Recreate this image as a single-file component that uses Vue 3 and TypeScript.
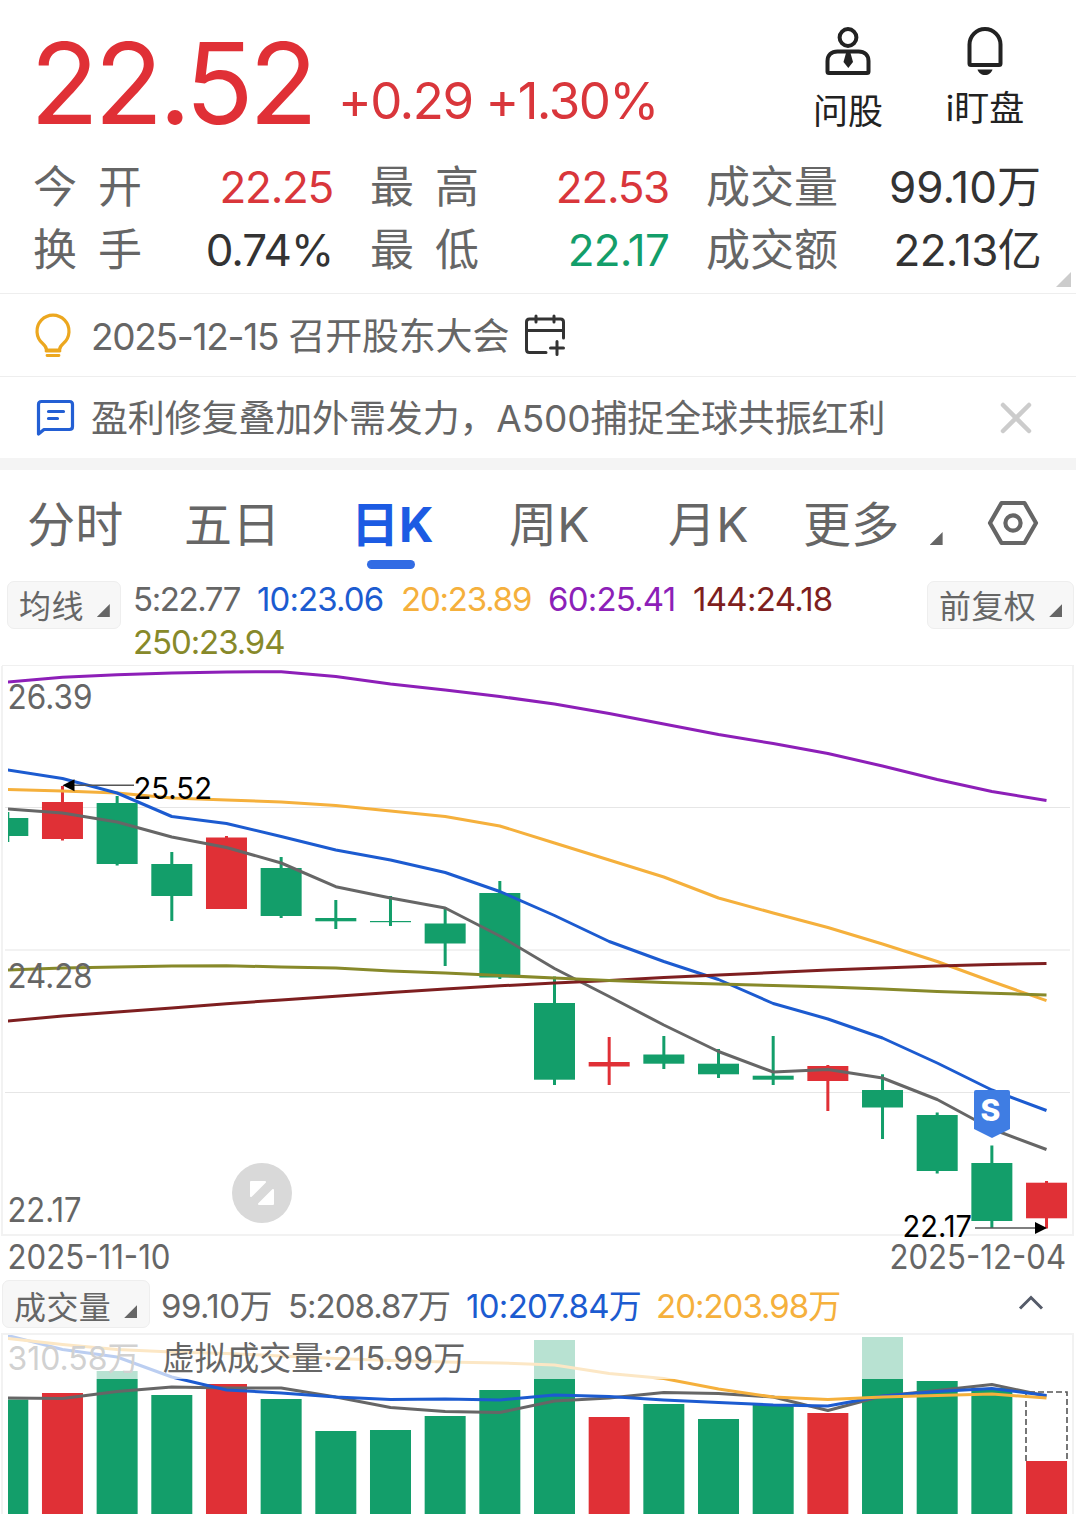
<script setup lang="ts">
interface Quote { label: string; value: string; tone: string; track: number }
interface Average { text: string; color: string; width: number; track: number }
interface Candle { top: number; bottom: number; high: number; low: number; up?: boolean }
interface Line { color: string; ys: number[] }

const RED = '#e03036'
const GREEN = '#139e6a'
const GRAY = '#666666'
const BLUE = '#1c5bd0'
const ORANGE = '#f5b03c'

const quotes: Quote[] = [
  { label: '今开', value: '22.25', tone: 'up', track: -1.3 },
  { label: '最高', value: '22.53', tone: 'up', track: -1.3 },
  { label: '成交量', value: '99.10万', tone: 'plain', track: 0 },
  { label: '换手', value: '0.74%', tone: 'plain', track: -1.1 },
  { label: '最低', value: '22.17', tone: 'down', track: -0.8 },
  { label: '成交额', value: '22.13亿', tone: 'plain', track: -0.7 },
]

const averages: Average[] = [
  { text: '5:22.77', color: GRAY, width: 124, track: -1.4 },
  { text: '10:23.06', color: BLUE, width: 144, track: -0.9 },
  { text: '20:23.89', color: ORANGE, width: 147, track: -1.2 },
  { text: '60:25.41', color: '#8d1fb8', width: 145, track: -0.8 },
  { text: '144:24.18', color: '#7e1f20', width: 142, track: -0.7 },
  { text: '250:23.94', color: '#87892a', width: 152, track: -1.1 },
]

const volumeAverages: Average[] = [
  { text: '99.10万', color: GRAY, width: 127, track: -0.5 },
  { text: '5:208.87万', color: GRAY, width: 178, track: -1 },
  { text: '10:207.84万', color: BLUE, width: 190, track: -0.7 },
  { text: '20:203.98万', color: ORANGE, width: 190, track: -1 },
]

const tabs = ['分时', '五日', '日K', '周K', '月K', '更多']
const activeTab = '日K'

const centre = (i: number): number => 7.8 + i * 54.67

const candles: Candle[] = [
  { top: 818, bottom: 836, high: 812, low: 842 },
  { top: 802, bottom: 839, high: 786, low: 840.5, up: true },
  { top: 803, bottom: 864, high: 796, low: 865.5 },
  { top: 864, bottom: 896, high: 852, low: 921 },
  { top: 837.5, bottom: 909, high: 836, low: 909, up: true },
  { top: 868, bottom: 916, high: 857, low: 918 },
  { top: 918, bottom: 921.3, high: 900, low: 929 },
  { top: 921, bottom: 922.2, high: 896, low: 926 },
  { top: 923.5, bottom: 943.5, high: 907, low: 966 },
  { top: 893, bottom: 977.5, high: 881, low: 979 },
  { top: 1003, bottom: 1079.7, high: 976.5, low: 1085 },
  { top: 1062, bottom: 1066.5, high: 1037, low: 1085, up: true },
  { top: 1054.5, bottom: 1063.7, high: 1036, low: 1069 },
  { top: 1063.7, bottom: 1074.3, high: 1049, low: 1078 },
  { top: 1075.7, bottom: 1079.7, high: 1036, low: 1085 },
  { top: 1066, bottom: 1081, high: 1065, low: 1111, up: true },
  { top: 1090, bottom: 1107.5, high: 1074.3, low: 1139 },
  { top: 1115, bottom: 1171, high: 1112.5, low: 1173.5 },
  { top: 1163, bottom: 1221, high: 1145.5, low: 1228 },
  { top: 1182.7, bottom: 1218.3, high: 1181, low: 1228.5, up: true },
]

const priceLines: Line[] = [
  { color: '#8d1fb8', ys: [682, 677.3, 674.7, 673, 672, 671.7, 676.5, 684, 690, 696.5, 704, 713.5, 724, 734.5, 743.5, 753.5, 766, 779.5, 791.5, 800.5] },
  { color: ORANGE, ys: [789.5, 791, 793, 798, 800, 802, 805.5, 811, 816.5, 826, 843, 860, 877, 898, 913, 927.5, 944, 961.5, 981.5, 1000.7] },
  { color: BLUE, ys: [770, 778.5, 793, 816.5, 823.5, 836.5, 850, 860, 872.5, 891.5, 915.5, 941.5, 961.5, 979.5, 1003.5, 1019, 1038, 1063, 1090, 1110.5] },
  { color: GRAY, ys: [809, 813, 822, 837, 847.5, 863, 886.7, 898, 908, 936, 968.5, 996.5, 1025, 1051.5, 1072, 1069.5, 1078, 1099.5, 1129, 1149.5] },
  { color: '#7e1f20', ys: [1021, 1016, 1012, 1008, 1003.7, 1000, 996.3, 992.5, 989, 985.8, 983, 980.5, 977.5, 975, 972.5, 970, 968, 966, 964.5, 963.5] },
  { color: '#87892a', ys: [970, 968, 967, 966, 965.7, 967, 968, 971, 973, 975.5, 978, 980.5, 982.5, 984, 985.5, 987, 989, 991.5, 993.3, 995] },
]

const volumeTops = [1399.5, 1393, 1371, 1395, 1384, 1399, 1431, 1430, 1416, 1390, 1340, 1417, 1404, 1419, 1405, 1413, 1337, 1381, 1388, 1461]

const volumeLines: Line[] = [
  { color: GRAY, ys: [1398, 1398.5, 1391.5, 1387, 1388, 1388, 1397, 1407.5, 1411.5, 1412.5, 1401, 1398, 1392.5, 1393.5, 1397, 1410.5, 1396, 1390.5, 1384.5, 1396] },
  { color: BLUE, ys: [1335.5, 1349.5, 1357, 1377, 1390, 1393, 1397, 1399.5, 1399, 1400, 1395, 1396.5, 1400, 1402.5, 1405, 1406, 1396, 1391.5, 1388.5, 1395.5] },
  { color: ORANGE, ys: [1338.5, 1344.5, 1349.5, 1352, 1353.5, 1356, 1358.5, 1360.5, 1362, 1363, 1365, 1373.5, 1378.5, 1389, 1397, 1399.5, 1397, 1395.5, 1394, 1398] },
]

const points = (ys: number[]): string => ys.map((y, i) => `${centre(i).toFixed(1)},${y}`).join(' ')
</script>

<template>
  <main class="screen">
    <header class="summary">
      <div class="headline">
        <span class="price">22.52</span>
        <span class="change">+0.29 +1.30%</span>
        <nav class="actions">
          <div class="action ask">
            <svg width="48" height="52" viewBox="0 0 48 52" fill="none" stroke="#222" stroke-width="4">
              <circle cx="24" cy="12.5" r="8.4" />
              <path d="M3.5 46.5V36c0-6 4-9.500 10-9.500h21c6 0 10 3.500 10 9.500V46.500c0 1-.5 1.500-1.500 1.500H5c-1 0-1.500-.5-1.500-1.500Z" />
              <path d="M22 28h4.500l2.500 9-4.700 6-4.800-6z" fill="#222" stroke="none" />
            </svg>
            <span>问股</span>
          </div>
          <div class="action watch">
            <svg width="48" height="52" viewBox="0 0 48 52" fill="none" stroke="#222" stroke-width="4">
              <path d="M8.500 38.500V19.500a15.500 15.500 0 0 1 31 0V38.500c0 1-.5 1.500-1.500 1.500H10c-1 0-1.500-.5-1.500-1.500Z" />
              <path d="M16.500 44.500h15c-1 3.500-4 5.500-7.500 5.500s-6.500-2-7.500-5.500Z" fill="#222" stroke="none" />
            </svg>
            <span>i盯盘</span>
          </div>
        </nav>
      </div>
      <dl class="quotes">
        <div v-for="q in quotes" :key="q.label" class="quote">
          <dt :class="{ spread: q.label.length === 2 }">{{ q.label }}</dt>
          <dd :class="q.tone" :style="{ letterSpacing: q.track + 'px' }">{{ q.value }}</dd>
        </div>
      </dl>
      <i class="corner"></i>
    </header>

    <section class="notice event">
      <svg class="notice-icon" width="40" height="46" viewBox="0 0 40 46" fill="none" stroke="#eca71f" stroke-width="3.200">
        <path d="M12.500 38c0-3-1.500-4.500-3.800-6.500A16 16.100 0 1 1 29.300 31.500c-2.300 2-3.800 3.500-3.800 6.500Z" stroke-linejoin="round" />
        <path d="M12 39h14M13 43.500h12" stroke-linecap="round" stroke-width="2.800" />
      </svg>
      <span class="notice-text date"><time>2025-12-15</time> 召开股东大会</span>
      <svg width="44" height="44" viewBox="0 0 44 44" fill="none" stroke="#333" stroke-width="3" stroke-linecap="round">
        <path d="M23 39.500H6.500c-2 0-3-1-3-3V9c0-2 1-3 3-3h31c2 0 3 1 3 3v16M3.500 17.500h37M13 3v6M31 3v6M34 28.500v13M27.500 35h13" />
      </svg>
    </section>
    <section class="notice news">
      <svg class="notice-icon" width="40" height="40" viewBox="0 0 40 40" fill="none" stroke="#235fd4" stroke-width="3.200" stroke-linejoin="round">
        <path d="M3.500 36V6.500c0-2 1-3 3-3h28c2 0 3 1 3 3v22c0 2-1 3-3 3H9z" />
        <path d="M13.500 13.500h15M13.500 20.500h9" stroke-linecap="round" />
      </svg>
      <span class="notice-text">盈利修复叠加外需发力，A500捕捉全球共振红利</span>
      <svg class="close" width="34" height="34" viewBox="0 0 34 34" stroke="#cccccc" stroke-width="4.500" stroke-linecap="round">
        <path d="M4 4l26 26M30 4L4 30" />
      </svg>
    </section>

    <nav class="tabs">
      <span v-for="t in tabs" :key="t" class="tab" :class="{ active: t === activeTab }">
        {{ t }}<i v-if="t === '更多'" class="caret"></i>
      </span>
      <svg width="54" height="50" viewBox="0 0 54 50" fill="none" stroke="#666" stroke-width="4.200" stroke-linejoin="round">
        <path d="M15.500 5h23L50 25 38.500 45h-23L4 25z" />
        <circle cx="27" cy="25" r="7.600" />
      </svg>
    </nav>

    <section class="indicators">
      <button class="chip">均线<i class="caret"></i></button>
      <div class="values">
        <span v-for="a in averages" :key="a.text" :style="{ color: a.color, width: a.width + 'px', letterSpacing: a.track + 'px' }">{{ a.text }}</span>
      </div>
      <button class="chip adjust">前复权<i class="caret"></i></button>
    </section>

    <svg class="price-chart" width="1076" height="614" viewBox="0 664 1076 614">
      <path d="M5 807.500H1070M5 1092.500H1070" stroke="#e6e6e6" />
      <path d="M5 950H1070" stroke="#f2f2f2" stroke-width="2" />
      <path d="M2 665.500H1074" stroke="#f0f0f0" />
      <path d="M2 666V1235H1073V666" fill="none" stroke="#f2f2f2" stroke-width="2" />
      <clipPath id="plot"><rect x="8" y="664" width="1062" height="572" /></clipPath>
      <g clip-path="url(#plot)">
        <g v-for="(c, i) in candles" :key="i" :fill="c.up ? RED : GREEN">
          <rect :x="centre(i) - 1.5" :y="c.high" width="3" :height="c.low - c.high" />
          <rect :x="centre(i) - 20.5" :y="c.top" width="41" :height="c.bottom - c.top" />
        </g>
        <polyline v-for="(l, i) in priceLines" :key="i" :points="points(l.ys)" :stroke="l.color" class="line" />
      </g>
      <path d="M74 785.200H134M975 1228H1036" stroke="#555" stroke-width="1.400" />
      <path d="M62.500 785.200l12-6v12zM1047 1228l-12-6v12z" />
      <g class="axis">
        <text x="7.500" y="708.500" textLength="85" lengthAdjust="spacingAndGlyphs">26.39</text>
        <text x="7.500" y="987.500" textLength="85" lengthAdjust="spacingAndGlyphs">24.28</text>
        <text x="7.500" y="1221.500" textLength="74" lengthAdjust="spacingAndGlyphs">22.17</text>
        <text x="7.500" y="1268.500" textLength="163" lengthAdjust="spacingAndGlyphs">2025-11-10</text>
        <text x="889.500" y="1268.500" textLength="176.500" lengthAdjust="spacingAndGlyphs">2025-12-04</text>
      </g>
      <g class="extreme">
        <text x="133.500" y="798.500" textLength="78.500" lengthAdjust="spacingAndGlyphs">25.52</text>
        <text x="902.500" y="1237" textLength="69.500" lengthAdjust="spacingAndGlyphs">22.17</text>
      </g>
      <path d="M976 1090h32q2 0 2 2v37l-18 9-18-9v-37q0-2 2-2z" fill="#3f7de3" />
      <text x="990.500" y="1120.500" class="flag">S</text>
      <circle cx="262" cy="1193" r="30" fill="#d9d9d9" />
      <path d="M251 1182h14l-14 14zM273 1190v14h-14z" fill="#fff" stroke="#fff" stroke-width="2" stroke-linejoin="round" />
    </svg>

    <section class="volume-bar">
      <button class="chip volume-chip">成交量<i class="caret"></i></button>
      <div class="values">
        <span v-for="a in volumeAverages" :key="a.text" :style="{ color: a.color, width: a.width + 'px', letterSpacing: a.track + 'px' }">{{ a.text }}</span>
      </div>
      <svg class="collapse" width="26" height="18" viewBox="0 0 26 18" fill="none" stroke="#555b69" stroke-width="3">
        <path d="M2 14.500L13 3.500l11 11" />
      </svg>
    </section>

    <svg class="volume-chart" width="1076" height="184" viewBox="0 1330 1076 184">
      <path d="M2 1514V1334H1073V1514" fill="none" stroke="#f2f2f2" stroke-width="2" />
      <clipPath id="volume"><rect x="8" y="1335" width="1062" height="179" /></clipPath>
      <g clip-path="url(#volume)">
        <rect v-for="(y, i) in volumeTops" :key="i" :x="centre(i) - 20.5" :y="y" width="41" :height="1514 - y" :fill="candles[i].up ? RED : GREEN" />
        <path d="M1026 1461V1392H1067V1461" fill="none" stroke="#555" stroke-width="1.600" stroke-dasharray="6 3" />
        <polyline v-for="(l, i) in volumeLines" :key="i" :points="points(l.ys)" :stroke="l.color" class="line" />
      </g>
      <text x="7.500" y="1369.500" textLength="132" lengthAdjust="spacingAndGlyphs" class="volume-text">310.58万</text>
      <rect x="4" y="1335" width="1068" height="44" fill="#fff" fill-opacity="0.7" />
      <text x="162.500" y="1369.500" textLength="303" lengthAdjust="spacingAndGlyphs" class="volume-text">虚拟成交量:215.99万</text>
    </svg>
  </main>
</template>

<style>
body { margin: 0; background: #fff; }
</style>

<style scoped>
.screen {
  width: 1076px;
  height: 1514px;
  overflow: hidden;
  background: #fff;
  color: #666;
  font-family: Inter, "Noto Sans CJK SC", sans-serif;
  white-space: nowrap;
}
.summary { position: relative; height: 293px; }
.headline { display: flex; height: 154px; }
.price {
  width: 309px;
  padding-left: 30px;
  color: #e03036;
  font-size: 113px;
  line-height: 167px;
  letter-spacing: -4.6px;
  box-sizing: border-box;
}
.change {
  width: 482px;
  padding-left: 29px;
  color: #d9363b;
  font-size: 51px;
  line-height: 201px;
  letter-spacing: -1.5px;
}
.actions { display: flex; }
.action {
  display: flex;
  flex-direction: column;
  align-items: center;
  color: #222;
  font-size: 35px;
  line-height: 40px;
}
.action svg { display: block; margin-top: 25px; }
.ask { width: 70px; margin-left: -7px; }
.ask span { margin-top: 14px; }
.watch { width: 80px; margin-left: 62px; }
.watch span { margin-top: 11px; }
.quotes {
  display: grid;
  grid-template-columns: 300px 299px 335px;
  column-gap: 37px;
  margin: 2px 0 0 33px;
  font-size: 44px;
  line-height: 63px;
}
.quote { display: flex; justify-content: space-between; }
dt { font-size: 44px; }
dt.spread { letter-spacing: 21px; }
dd { margin: 0; }
.up { color: #d9363b; }
.down { color: #139e6a; }
.plain { color: #333; }
.corner {
  position: absolute;
  right: 5px;
  bottom: 6px;
  width: 15px;
  height: 15px;
  background: #ccc;
  clip-path: polygon(100% 0, 100% 100%, 0 100%);
}
.notice {
  display: flex;
  align-items: center;
  box-sizing: border-box;
  border-top: 1px solid #eee;
  padding-left: 34px;
  font-size: 37px;
}
.event { height: 83px; }
.news { height: 94px; border-bottom: 12px solid #f4f4f4; }
.notice-icon { margin-right: 17px; }
.news .notice-icon { margin-left: 1px; margin-right: 16px; }
.notice-text { letter-spacing: -0.15px; line-height: 42px; margin-top: 3px; }
.date { width: 432px; letter-spacing: -0.2px; }
.date time { letter-spacing: -1.3px; }
.close { margin-left: auto; margin-right: 43px; }
.tabs {
  display: grid;
  grid-template-columns: 157px 167px 158px 159px 135px 183px 54px;
  height: 108px;
  padding-left: 27px;
  font-size: 48px;
  line-height: 109px;
  letter-spacing: 0.3px;
}
.tabs svg { margin-top: 28px; }
.tab { position: relative; }
.active { color: #1c5be3; font-weight: 700; letter-spacing: 0; }
.active::after {
  content: "";
  position: absolute;
  left: 16px;
  bottom: 10px;
  width: 48px;
  height: 9px;
  border-radius: 5px;
  background: #326ce4;
}
.caret {
  display: inline-block;
  width: 13px;
  height: 13px;
  margin-left: 13px;
  background: #666;
  clip-path: polygon(100% 0, 100% 100%, 0 100%);
}
.tab .caret { margin-left: 30px; vertical-align: -3px; }
.indicators { display: flex; height: 86px; padding: 0 2px 0 7px; }
.chip {
  flex: none;
  box-sizing: border-box;
  height: 48px;
  margin: 3px 0 0;
  padding: 0 0 0 11px;
  border: 1px solid #eee;
  border-radius: 7px;
  background: #f7f7f7;
  color: #666;
  font: 32px/50px Inter, "Noto Sans CJK SC", sans-serif;
  letter-spacing: 0.4px;
  text-align: left;
  width: 114px;
}
.chip .caret { vertical-align: 1px; }
.adjust { width: 147px; margin-left: auto; }
.values {
  display: flex;
  flex-wrap: wrap;
  align-content: flex-start;
  width: 740px;
  margin-left: 12px;
  font-size: 33px;
  line-height: 43px;
}
.price-chart, .volume-chart { display: block; overflow: visible; }
.line { fill: none; stroke-width: 3; stroke-linejoin: round; }
.axis { font-size: 34px; fill: #666; }
.volume-text { font-size: 33px; fill: #666; }
.extreme { font-size: 30px; fill: #000; }
.flag { font-size: 30px; font-weight: 800; fill: #fff; text-anchor: middle; }
.volume-bar { display: flex; height: 52px; padding-left: 2px; }
.volume-bar .values { flex-wrap: nowrap; line-height: 57px; margin-left: 11px; }
.volume-chip { width: 148px; margin-top: 2px; line-height: 53px; }
.collapse { margin: 16px 0 0 117px; }
</style>
